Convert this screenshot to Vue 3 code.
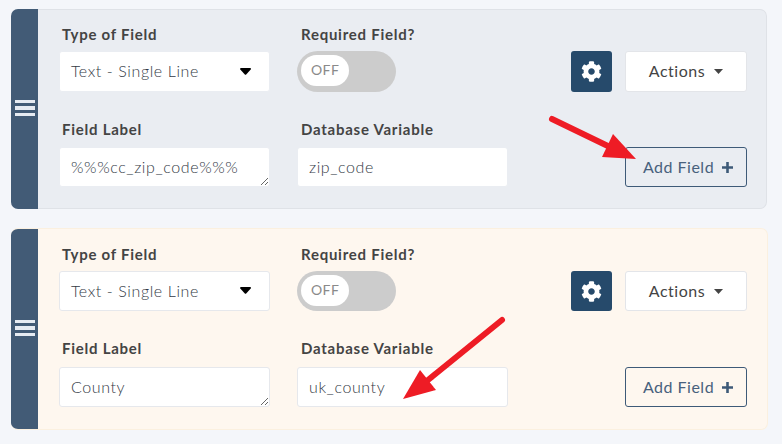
<script setup>
const cards = [
  { id: 1, tone: 'plain', label: '%%%cc_zip_code%%%', variable: 'zip_code' },
  { id: 2, tone: 'fresh', label: 'County', variable: 'uk_county' },
]
const cog = 'M487.4 315.7l-42.6-24.6c4.3-23.2 4.3-47 0-70.2l42.6-24.6c4.9-2.8 7.1-8.6 5.5-14-11.1-35.6-30-67.8-54.7-94.6-3.8-4.1-10-5.1-14.8-2.3L380.8 110c-17.9-15.4-38.5-27.3-60.8-35.1V25.8c0-5.6-3.9-10.5-9.4-11.7-36.7-8.2-74.3-7.8-109.2 0-5.5 1.2-9.4 6.1-9.4 11.7V75c-22.2 7.9-42.8 19.8-60.8 35.1L88.7 85.5c-4.9-2.8-11-1.9-14.8 2.3-24.7 26.7-43.6 58.9-54.7 94.6-1.7 5.4.6 11.2 5.5 14L67.3 221c-4.3 23.2-4.3 47 0 70.2l-42.6 24.6c-4.9 2.8-7.1 8.6-5.5 14 11.1 35.6 30 67.8 54.7 94.6 3.8 4.1 10 5.1 14.8 2.3l42.6-24.6c17.9 15.4 38.5 27.3 60.8 35.1v49.2c0 5.6 3.9 10.5 9.4 11.7 36.7 8.2 74.3 7.8 109.2 0 5.5-1.2 9.4-6.1 9.4-11.7v-49.2c22.2-7.9 42.8-19.8 60.8-35.1l42.6 24.6c4.9 2.8 11 1.9 14.8-2.3 24.7-26.7 43.6-58.9 54.7-94.6 1.5-5.5-.7-11.3-5.6-14.1zM256 336c-44.1 0-80-35.9-80-80s35.9-80 80-80 80 35.9 80 80-35.9 80-80 80z'
</script>

<template>
  <div class="page">
    <div v-for="c in cards" :key="c.id" class="card" :class="c.tone">
      <div class="handle">
        <span class="bars"><i></i><i></i><i></i></span>
      </div>
      <div class="body">
        <div class="row top">
          <div class="field">
            <label>Type of Field</label>
            <div class="control select">
              <span>Text - Single Line</span>
              <svg class="select-caret" width="11" height="7" viewBox="0 0 11 7"><path d="M1 0h9c.8 0 1.2.9.7 1.5L6.2 6.5c-.4.4-1 .4-1.4 0L.3 1.5C-.2.9.2 0 1 0z" fill="#000" /></svg>
            </div>
          </div>
          <div class="field">
            <label>Required Field?</label>
            <div class="toggle"><span class="knob">OFF</span></div>
          </div>
          <div class="actions">
            <button class="gear">
              <svg width="21" height="21" viewBox="0 0 512 512"><path :d="cog" fill="#fff" /></svg>
            </button>
            <button class="btn">
              <span>Actions</span>
              <svg width="9" height="5" viewBox="0 0 9 5"><path d="M0 0h9L4.5 5z" fill="#444" /></svg>
            </button>
          </div>
        </div>
        <div class="row bottom">
          <div class="field">
            <label>Field Label</label>
            <textarea class="control area" :value="c.label" rows="1"></textarea>
          </div>
          <div class="field">
            <label>Database Variable</label>
            <input class="control" :value="c.variable" />
          </div>
          <div class="actions">
            <button class="btn add">
              <span>Add Field</span>
              <svg width="11" height="11" viewBox="0 0 11 11"><path d="M4.2 0h2.6v4.2H11v2.6H6.8V11H4.2V6.8H0V4.2h4.2z" fill="#3e5a78" /></svg>
            </button>
          </div>
        </div>
      </div>
    </div>

    <svg class="arrows" width="782" height="444" viewBox="0 0 782 444">
      <path d="M552 119L612 148" stroke="#ee1c25" stroke-width="6" stroke-linecap="round" />
      <path d="M602 157L613 134L636 159z" fill="#ee1c25" />
      <path d="M502 320L428 380" stroke="#ee1c25" stroke-width="6" stroke-linecap="round" />
      <path d="M420 370L436 390L403 399z" fill="#ee1c25" />
    </svg>
  </div>
</template>

<style scoped>
.page {
  position: relative;
  width: 782px;
  height: 444px;
  padding: 9px 0 0 11px;
  box-sizing: border-box;
  overflow: hidden;
  font-family: "Lato", "Open Sans", sans-serif;
}

.card {
  display: flex;
  box-sizing: border-box;
  border-radius: 7px;
  overflow: hidden;
}
.card.plain {
  width: 756px;
  height: 200px;
  margin-bottom: 19px;
  background: #eaedf2;
}
.card.fresh {
  width: 757px;
  height: 202px;
  background: #fef7ef;
  border: 1px solid #fbf0df;
  border-left: 0;
}

.handle {
  display: flex;
  align-items: center;
  justify-content: center;
  width: 27px;
  background: #425b76;
  flex-shrink: 0;
}
.bars {
  display: flex;
  flex-direction: column;
  gap: 3px;
  margin-bottom: 2px;
}
.bars i {
  display: block;
  width: 20px;
  height: 3.5px;
  background: #e6ebf2;
}

.body {
  flex: 1;
  padding: 14px 19px 0 21px;
}
.plain .body {
  border: 1px solid #dfe2e7;
  border-left: 0;
  border-radius: 0 7px 7px 0;
}
.fresh .body {
  padding: 15px 20px 0 21px;
}

.row {
  display: flex;
  align-items: flex-start;
}
.row.bottom {
  margin-top: 27px;
}

.field {
  width: 211px;
  margin-right: 27px;
}
.field label {
  display: block;
  height: 20px;
  margin: 0 0 7px 3px;
  font-size: 15px;
  line-height: 20px;
  font-weight: 700;
  letter-spacing: 0.75px;
  color: #444;
}
.field + .field label {
  margin-left: 4px;
}
.bottom .field label {
  margin-bottom: 8px;
}
.fresh .bottom .field label {
  margin-bottom: 9px;
}

.control {
  display: block;
  width: 100%;
  height: 40px;
  box-sizing: border-box;
  padding: 0 11px 2px;
  font-family: inherit;
  font-size: 16px;
  font-weight: 300;
  letter-spacing: 0.6px;
  color: #333a45;
  background: #fff;
  border: 1px solid #e6e8ec;
  border-radius: 3px;
  outline: none;
}
.plain .control {
  border-color: #eaedf2;
}
.plain .top .control {
  height: 41px;
}
.area {
  padding-top: 8px;
  line-height: 22px;
  resize: both;
}
.select {
  display: flex;
  align-items: center;
  justify-content: space-between;
  padding-right: 18px;
}
.select-caret {
  margin-top: 1px;
}

.toggle {
  width: 99px;
  height: 41px;
  padding: 4px;
  box-sizing: border-box;
  border-radius: 21px;
  background: #ccc;
}
.fresh .toggle {
  height: 40px;
}
.knob {
  display: block;
  width: 48px;
  height: 31px;
  box-sizing: border-box;
  padding-left: 10px;
  border-radius: 16px;
  background: #fff;
  font-size: 14px;
  letter-spacing: 0.4px;
  line-height: 30px;
  color: #8a8a8a;
}

.actions {
  display: flex;
  justify-content: flex-end;
  gap: 13px;
  flex: 1;
  margin-top: 27px;
}
.bottom .actions {
  margin-top: 28px;
}
.fresh .bottom .actions {
  margin-top: 29px;
}

.gear {
  display: flex;
  align-items: center;
  justify-content: center;
  width: 41px;
  height: 41px;
  padding: 0;
  border: 0;
  border-radius: 3px;
  background: #264a6b;
}
.fresh .gear {
  height: 40px;
}

.btn {
  display: flex;
  align-items: center;
  justify-content: center;
  gap: 9px;
  width: 122px;
  height: 41px;
  padding: 0;
  font-family: inherit;
  font-size: 16px;
  letter-spacing: 0.5px;
  color: #444;
  background: #fff;
  border: 1px solid #e3e5e9;
  border-radius: 3px;
}
.btn span {
  margin-bottom: 2px;
}
.fresh .btn {
  height: 40px;
}
.btn.add {
  gap: 8px;
  height: 40px;
  padding-left: 4px;
  color: #48617d;
  background: transparent;
  border-color: #3e5a78;
}

.arrows {
  position: absolute;
  top: 0;
  left: 0;
  pointer-events: none;
}
</style>

<style>
html, body {
  margin: 0;
  background: #f4f6fa;
}
</style>
